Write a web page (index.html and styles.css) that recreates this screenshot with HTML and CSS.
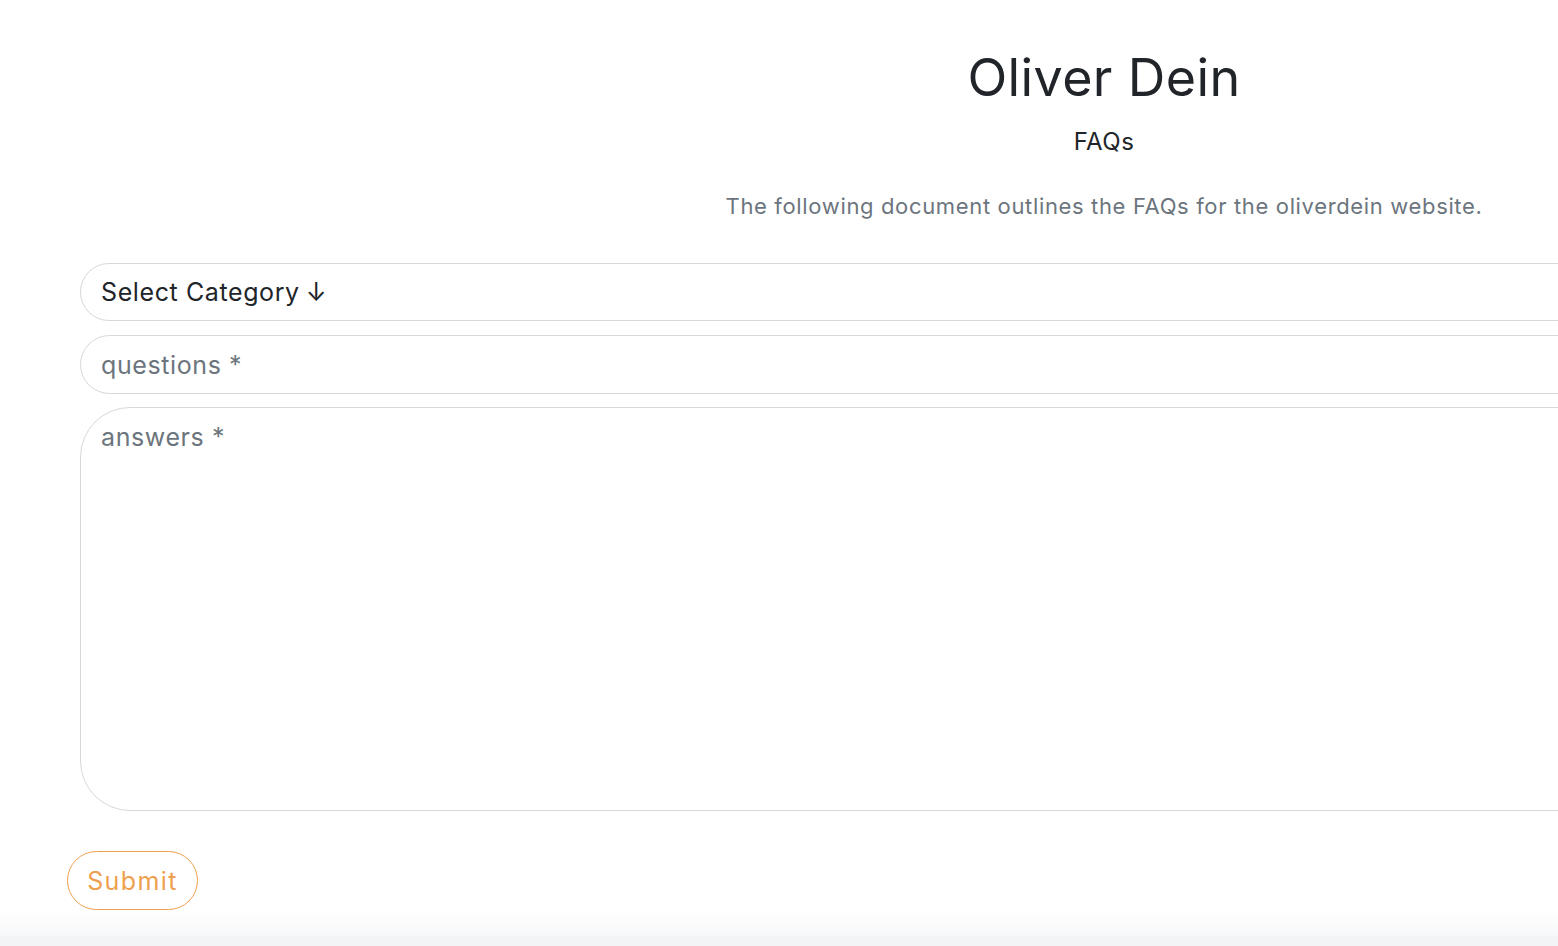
FILE: index.html
```html
<!DOCTYPE html>
<html lang="en">
<head>
<meta charset="utf-8">
<title>Oliver Dein - FAQs</title>
<link rel="stylesheet" href="styles.css">
</head>
<body>
<div class="page">
  <main class="main">
    <header class="head">
      <h1 class="title">Oliver Dein</h1>
      <h2 class="subtitle">FAQs</h2>
      <p class="lead">The following document outlines the FAQs for the oliverdein website.</p>
    </header>
    <form class="form">
      <div class="fields">
        <div class="field select">Select Category <span class="arrow">↓</span></div>
        <div class="field input"><span class="ph">questions *</span></div>
        <div class="field textarea"><span class="ph">answers *</span></div>
      </div>
      <button type="button" class="submit">Submit</button>
    </form>
  </main>
  <div class="fade"></div>
  <div class="strip"></div>
</div>
</body>
</html>
```
FILE: styles.css
```css
html, body {
  margin: 0;
  padding: 0;
  background: #ffffff;
  overflow: hidden;
}
body {
  font-family: Inter, "Open Sans", sans-serif;
  color: #212529;
}
.page {
  width: 1558px;
  height: 946px;
  display: flex;
  flex-direction: column;
  overflow: hidden;
}
.main {
  flex: 1;
  width: 2048px;
  margin-left: 80px;
  display: flex;
  flex-direction: column;
}
.head {
  display: flex;
  flex-direction: column;
  align-items: center;
  padding-top: 45px;
}
.title {
  margin: 0;
  font-weight: 400;
  font-size: 52px;
  line-height: 66px;
  color: #212529;
  letter-spacing: 0.4px;
}
.subtitle {
  margin: 0;
  margin-top: 16px;
  font-weight: 400;
  font-size: 24px;
  line-height: 30px;
  color: #212529;
  letter-spacing: 0.5px;
}
.lead {
  margin: 0;
  margin-top: 34px;
  font-size: 22px;
  line-height: 30px;
  color: #6c757d;
  letter-spacing: 0.65px;
}
.form {
  margin-top: 42px;
  margin-left: -13px;
  display: flex;
  flex-direction: column;
}
.fields {
  margin-left: 13px;
  display: flex;
  flex-direction: column;
}
.field {
  box-sizing: border-box;
  border: 1px solid #d5d8dc;
  padding: 0 20px;
  font-size: 25px;
  letter-spacing: 0.6px;
  display: flex;
  align-items: center;
}
.select {
  height: 58px;
  border-radius: 30px;
  color: #212529;
}
.arrow {
  margin-left: 6px;
}
.input {
  margin-top: 14px;
  height: 59px;
  border-radius: 30px;
}
.textarea {
  margin-top: 13px;
  height: 404px;
  border-radius: 50px;
  align-items: flex-start;
  padding-top: 14px;
}
.ph {
  color: #6c757d;
}
.submit {
  margin-top: 40px;
  align-self: flex-start;
  box-sizing: border-box;
  width: 131px;
  height: 59px;
  border-radius: 30px;
  border: 1px solid #eea04e;
  background: #ffffff;
  color: #eea04e;
  font-family: Inter, "Open Sans", sans-serif;
  font-size: 25px;
  letter-spacing: 1.4px;
  padding: 0;
}
.fade {
  height: 26px;
  margin-top: -26px;
  background: linear-gradient(to bottom, rgba(245,246,248,0), rgba(245,246,248,0.8));
}
.strip {
  height: 10px;
  background: #f3f4f6;
}
```
